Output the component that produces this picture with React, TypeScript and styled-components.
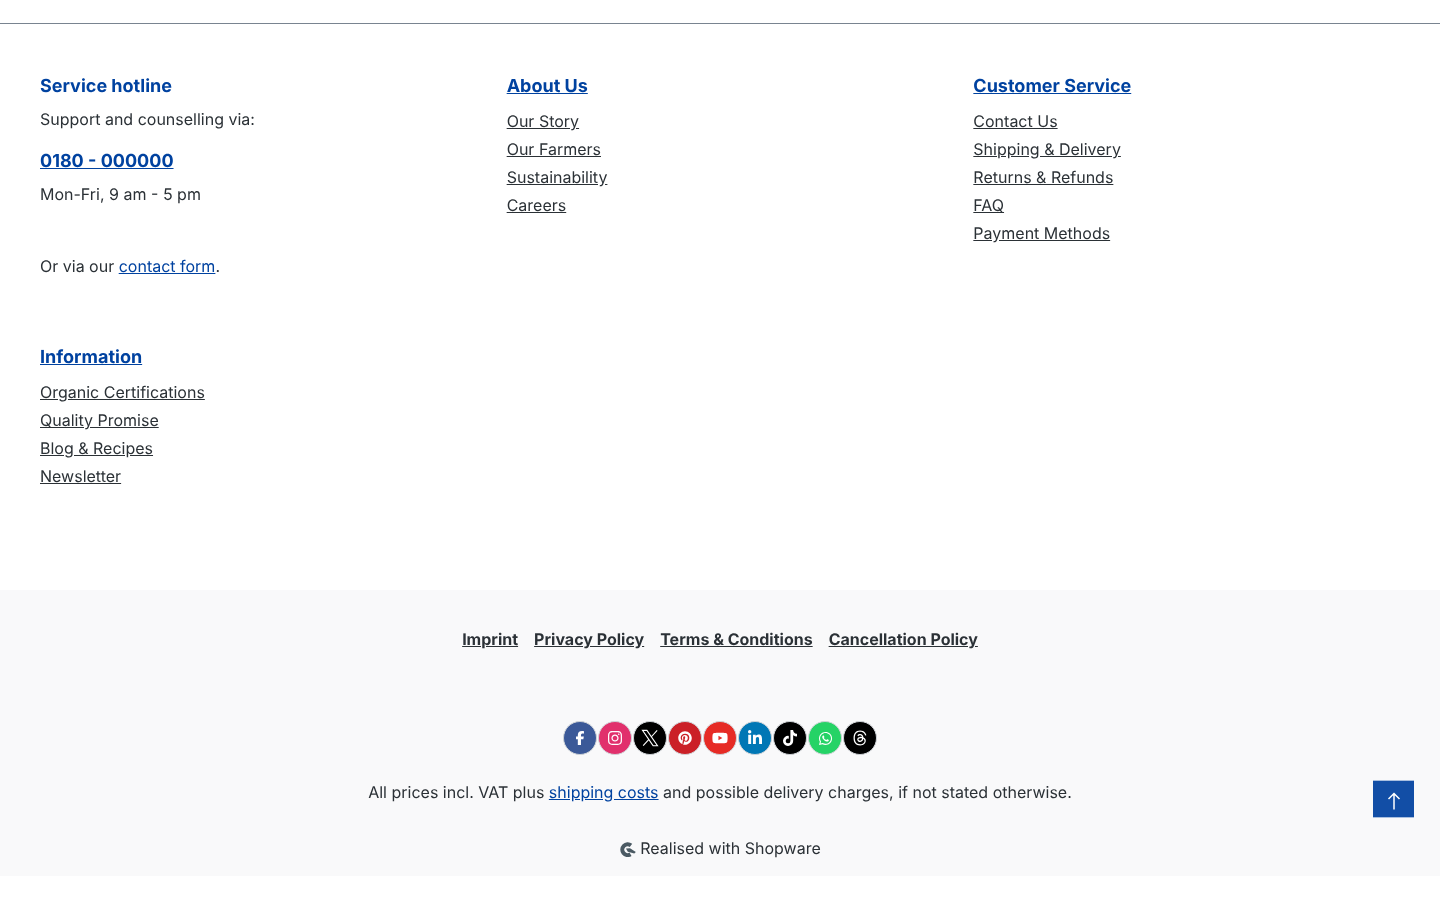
import React from "react";
import styled, { createGlobalStyle } from "styled-components";
import {
  FaFacebookF,
  FaInstagram,
  FaPinterest,
  FaYoutube,
  FaLinkedinIn,
  FaTiktok,
  FaWhatsapp,
  FaThreads
} from "react-icons/fa6";

const GlobalStyle = createGlobalStyle`
  html, body {
    margin: 0;
    padding: 0;
    background: #fff;
    font-family: Inter, "Liberation Sans", sans-serif;
    font-size: 16px;
    line-height: 24px;
    color: #2b3136;
    text-rendering: geometricPrecision;
  }
  #root {
    will-change: transform;
  }
`;

const Page = styled.footer`
  padding-top: 23px;
  position: relative;
`;

const Columns = styled.div`
  border-top: 1px solid #798490;
  padding: 48px 0 0 40px;
  display: grid;
  grid-template-columns: repeat(3, 1fr);
  row-gap: 65px;
  height: 567px;
  box-sizing: border-box;
  align-content: start;
`;

const Col = styled.div`
  display: flex;
  flex-direction: column;
`;

const Heading = styled.div`
  font-size: 18px;
  line-height: 29px;
  font-weight: 700;
  color: #0042a0;
  margin-bottom: 6px;
`;

const HeadLink = styled.a`
  font-size: 18px;
  line-height: 29px;
  font-weight: 700;
  color: #0042a0;
  text-decoration: underline;
  margin-bottom: 6px;
`;

const Text = styled.p<{ $gap?: number }>`
  margin: 0;
  line-height: 24px;
  margin-bottom: ${(p) => p.$gap ?? 0}px;
`;

const Inline = styled.a`
  color: #0042a0;
  text-decoration: underline;
`;

const Links = styled.ul`
  list-style: none;
  margin: 2px 0 0;
  padding: 0;
  display: flex;
  flex-direction: column;
  gap: 4px;
`;

const LinkItem = styled.a`
  color: #2b3136;
  text-decoration: underline;
  display: block;
`;

const Bottom = styled.div`
  background: #f9f9fa;
  height: 286px;
  padding-top: 37px;
  box-sizing: border-box;
  display: flex;
  flex-direction: column;
  align-items: center;
`;

const LegalRow = styled.div`
  display: flex;
  gap: 16px;
`;

const LegalLink = styled.a`
  font-weight: 700;
  color: #2b3136;
  text-decoration: underline;
`;

const Social = styled.div`
  display: flex;
  gap: 1px;
  margin-top: 70px;
`;

const Round = styled.a<{ $bg: string }>`
  width: 34px;
  height: 34px;
  box-sizing: border-box;
  border-radius: 50%;
  border: 1px solid #d0d4d8;
  background: ${(p) => p.$bg};
  color: #fff;
  display: flex;
  align-items: center;
  justify-content: center;
  font-size: 16px;
`;

const Prices = styled.p`
  margin: 25px 0 0;
`;

const Made = styled.div`
  margin-top: 32px;
  display: flex;
  align-items: center;
  gap: 4px;
`;

const TopButton = styled.a`
  position: absolute;
  left: 1373px;
  top: 780px;
  width: 41px;
  height: 38px;
  box-sizing: border-box;
  padding-top: 3px;
  border-top: 1px solid #a9bfe0;
  border-bottom: 1px solid #a9bfe0;
  background: #124ea6;
  color: #fff;
  display: flex;
  align-items: center;
  justify-content: center;
`;

const XLogo = () => (
  <svg width="20" height="20" viewBox="0 0 24 24" fill="none" stroke="#fff" strokeWidth="1.300">
    <path d="M3 2.800h5.300l12.700 18.400h-5.300zM20.600 2.800l-7.500 8.300M10.700 13.700l-6.900 7.500" />
  </svg>
);

const ShopwareLogo = () => (
  <svg width="17" height="17" viewBox="0 0 17 17">
    <path d="M12 5.400A5.400 5.400 0 1 0 11.500 14.300" fill="none" stroke="#4b5a63" strokeWidth="4" />
    <path d="M7 8.500 11 8.200l5.800 3.800-1.500 1.600-6.500-1.800z" fill="#4b5a63" />
  </svg>
);

const socials = [
  { bg: "#3b5998", icon: <FaFacebookF size={14} /> },
  { bg: "#e1306c", icon: <FaInstagram /> },
  { bg: "#000", icon: <XLogo /> },
  { bg: "#cb2027", icon: <FaPinterest size={14} /> },
  { bg: "#e62b25", icon: <FaYoutube size={16} /> },
  { bg: "#0077b5", icon: <FaLinkedinIn /> },
  { bg: "#000", icon: <FaTiktok /> },
  { bg: "#25d366", icon: <FaWhatsapp size={15} /> },
  { bg: "#000", icon: <FaThreads /> }
];

const about = ["Our Story", "Our Farmers", "Sustainability", "Careers"];
const service = ["Contact Us", "Shipping & Delivery", "Returns & Refunds", "FAQ", "Payment Methods"];
const info = ["Organic Certifications", "Quality Promise", "Blog & Recipes", "Newsletter"];
const legal = ["Imprint", "Privacy Policy", "Terms & Conditions", "Cancellation Policy"];

const LinkList = ({ items }: { items: string[] }) => (
  <Links>
    {items.map((item) => (
      <li key={item}>
        <LinkItem>{item}</LinkItem>
      </li>
    ))}
  </Links>
);

const App = () => (
  <Page>
    <GlobalStyle />
    <Columns>
      <Col>
        <Heading>Service hotline</Heading>
        <Text $gap={16}>Support and counselling via:</Text>
        <HeadLink>0180 - 000000</HeadLink>
        <Text $gap={48}>Mon-Fri, 9 am - 5 pm</Text>
        <Text>
          Or via our <Inline>contact form</Inline>.
        </Text>
      </Col>
      <Col>
        <HeadLink>About Us</HeadLink>
        <LinkList items={about} />
      </Col>
      <Col>
        <HeadLink>Customer Service</HeadLink>
        <LinkList items={service} />
      </Col>
      <Col>
        <HeadLink>Information</HeadLink>
        <LinkList items={info} />
      </Col>
    </Columns>
    <Bottom>
      <LegalRow>
        {legal.map((item) => (
          <LegalLink key={item}>{item}</LegalLink>
        ))}
      </LegalRow>
      <Social>
        {socials.map((s, idx) => (
          <Round key={idx} $bg={s.bg}>
            {s.icon}
          </Round>
        ))}
      </Social>
      <Prices>
        All prices incl. VAT plus <Inline>shipping costs</Inline> and possible delivery charges, if not stated otherwise.
      </Prices>
      <Made>
        <ShopwareLogo />
        Realised with Shopware
      </Made>
    </Bottom>
    <TopButton>
      <svg width="14" height="18" viewBox="0 0 14 18" fill="none" stroke="#fff" strokeWidth="1.500">
        <path d="M7 17.500V1.500M1.500 7 7 1.500 12.500 7" />
      </svg>
    </TopButton>
  </Page>
);

export default App;
